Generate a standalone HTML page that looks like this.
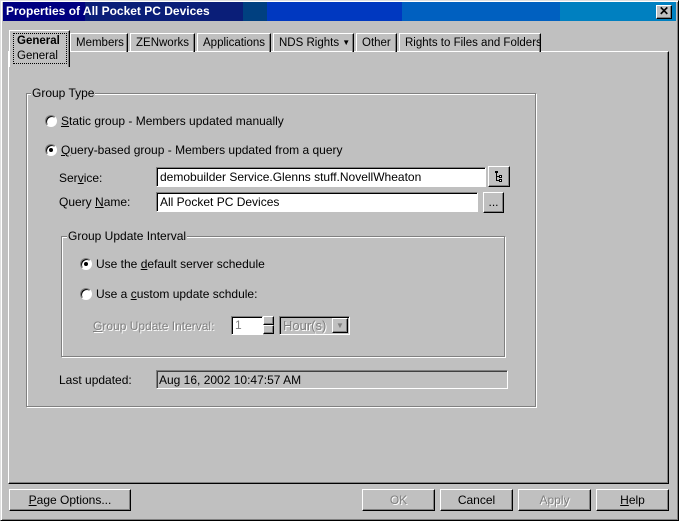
<!DOCTYPE html>
<html><head><style>
*{margin:0;padding:0;box-sizing:border-box}
body{width:679px;height:521px;background:#c0c0c0;font-family:"Liberation Sans",sans-serif;font-size:12px;color:#000;position:relative;overflow:hidden}
.a{position:absolute;white-space:nowrap}
.raised{border:1px solid;border-color:#fff #000 #000 #fff;box-shadow:inset -1px -1px 0 #808080}
.sunk{border:1px solid;border-color:#808080 #fff #fff #808080;box-shadow:inset 1px 1px 0 #000}
.etch{border:1px solid #808080;box-shadow:1px 1px 0 #fff, inset 1px 1px 0 #fff}
.tab{position:absolute;top:33px;height:19px;border-top:1px solid #fff;border-left:1px solid #fff;border-right:1px solid #000;box-shadow:inset -1px 0 0 #808080;padding:3px 0 0 5px;white-space:nowrap;font-size:11.5px;overflow:hidden}
.radio{position:absolute;width:12px;height:12px;border-radius:50%;background:#fff;border:1px solid;border-color:#808080 #fff #fff #808080;box-shadow:inset 1px 1px 0 #000}
.radio.on::after{content:"";position:absolute;left:3px;top:3px;width:4px;height:4px;border-radius:50%;background:#000}
.btn{position:absolute;height:22px;text-align:center;line-height:20px}
u{text-decoration:underline}
.dis{color:#808080;text-shadow:1px 1px 0 #fff}
</style></head><body>
<div class="a" style="left:0;top:0;width:679px;height:521px;border:1px solid;border-color:#dfdfdf #000 #000 #dfdfdf;box-shadow:inset 1px 1px 0 #fff,inset -1px -1px 0 #808080"></div>
<div class="a" style="left:3px;top:2px;width:673px;height:19px;background:linear-gradient(90deg,#000080 0,#000080 82px,#0a1e78 82px,#0a1e78 240px,#004080 240px,#004080 264px,#0038c0 264px,#0038c0 399px,#0060c0 399px,#0060c0 557px,#0080c0 557px)"></div>
<div class="a" style="left:6px;top:4px;color:#fff;font-weight:bold;font-size:12px">Properties of All Pocket PC Devices</div>
<div class="a raised" style="left:656px;top:5px;width:16px;height:14px;background:#c0c0c0;font-size:12px;line-height:11px;text-align:center;font-weight:bold">✕</div>

<div class="a raised" style="left:8px;top:51px;width:661px;height:433px"></div>
<div class="tab" style="left:70px;width:58px">Members</div>
<div class="tab" style="left:130px;width:65px">ZENworks</div>
<div class="tab" style="left:197px;width:74px">Applications</div>
<div class="tab" style="left:273px;width:81px">NDS Rights <span style="font-size:8px;position:relative;top:-1px">▼</span></div>
<div class="tab" style="left:356px;width:41px">Other</div>
<div class="tab" style="left:399px;width:142px">Rights to Files and Folders</div>
<div class="a" style="left:9px;top:30px;width:61px;height:37px;background:#c0c0c0;border-top:1px solid #fff;border-left:1px solid #fff;border-right:1px solid #000;box-shadow:inset -1px 0 0 #808080"></div>
<div class="a" style="left:13px;top:33px;width:54px;height:31px;border:1px dotted #000"></div>
<div class="a" style="left:17px;top:35px;font-weight:bold;font-size:11.5px">General</div>
<div class="a" style="left:17px;top:50px;font-size:11.5px">General</div>

<div class="a etch" style="left:26px;top:93px;width:510px;height:314px"></div>
<div class="a" style="left:31px;top:86px;background:#c0c0c0;padding:0 1px">Group Type</div>
<div class="radio" style="left:45px;top:115px"></div>
<div class="a" style="left:61px;top:114px"><u>S</u>tatic group - Members updated manually</div>
<div class="radio on" style="left:45px;top:144px"></div>
<div class="a" style="left:61px;top:143px"><u>Q</u>uery-based group - Members updated from a query</div>

<div class="a" style="left:59px;top:171px">Ser<u>v</u>ice:</div>
<div class="a sunk" style="left:156px;top:167px;width:330px;height:20px;background:#fff;padding:2px 0 0 3px">demobuilder Service.Glenns stuff.NovellWheaton</div>
<div class="btn raised" style="left:488px;top:166px;width:22px;height:21px"><svg width="20" height="19" viewBox="0 0 20 19" style="position:absolute;left:0;top:0"><g fill="#000"><rect x="6" y="4" width="3" height="2"/><rect x="7" y="6" width="1" height="8"/><rect x="8" y="9" width="2" height="1"/><rect x="8" y="13" width="2" height="1"/><rect x="10" y="8" width="3" height="3"/><rect x="10" y="12" width="3" height="3"/><rect x="11" y="9" width="1" height="1" fill="#fff"/><rect x="11" y="13" width="1" height="1" fill="#fff"/></g></svg></div>
<div class="a" style="left:59px;top:195px">Query <u>N</u>ame:</div>
<div class="a sunk" style="left:156px;top:192px;width:322px;height:20px;background:#fff;padding:2px 0 0 3px">All Pocket PC Devices</div>
<div class="btn raised" style="left:483px;top:192px;width:21px;height:21px;line-height:18px">...</div>

<div class="a etch" style="left:61px;top:236px;width:444px;height:121px"></div>
<div class="a" style="left:67px;top:229px;background:#c0c0c0;padding:0 1px">Group Update Interval</div>
<div class="radio on" style="left:80px;top:258px"></div>
<div class="a" style="left:96px;top:257px">Use the <u>d</u>efault server schedule</div>
<div class="radio" style="left:80px;top:288px"></div>
<div class="a" style="left:96px;top:287px">Use a <u>c</u>ustom update schdule:</div>
<div class="a dis" style="left:93px;top:319px"><u>G</u>roup Update Interval:</div>
<div class="a sunk" style="left:231px;top:316px;width:32px;height:19px;background:#fff;padding:1px 0 0 3px;color:#808080">1</div>
<div class="a raised" style="left:263px;top:316px;width:11px;height:9px;background:#c0c0c0"></div>
<div class="a raised" style="left:263px;top:325px;width:11px;height:9px;background:#c0c0c0"></div>
<div class="a sunk" style="left:279px;top:316px;width:71px;height:19px;background:#c0c0c0;padding:1px 0 0 3px;font-size:13px"><span class="dis">Hour(s)</span></div>
<div class="a raised" style="left:332px;top:318px;width:16px;height:15px;font-size:8px;text-align:center;line-height:13px;color:#808080">▼</div>

<div class="a" style="left:59px;top:373px">Last updated:</div>
<div class="a" style="left:156px;top:370px;width:352px;height:19px;border:1px solid;border-color:#808080 #fff #fff #808080;box-shadow:inset 1px 1px 0 #404040;padding:2px 0 0 2px">Aug 16, 2002 10:47:57 AM</div>

<div class="btn raised" style="left:9px;top:489px;width:122px"><u>P</u>age Options...</div>
<div class="btn raised dis" style="left:362px;top:489px;width:73px">OK</div>
<div class="btn raised" style="left:440px;top:489px;width:73px">Cancel</div>
<div class="btn raised dis" style="left:518px;top:489px;width:73px">Apply</div>
<div class="btn raised" style="left:596px;top:489px;width:73px"><u>H</u>elp</div>
</body></html>
